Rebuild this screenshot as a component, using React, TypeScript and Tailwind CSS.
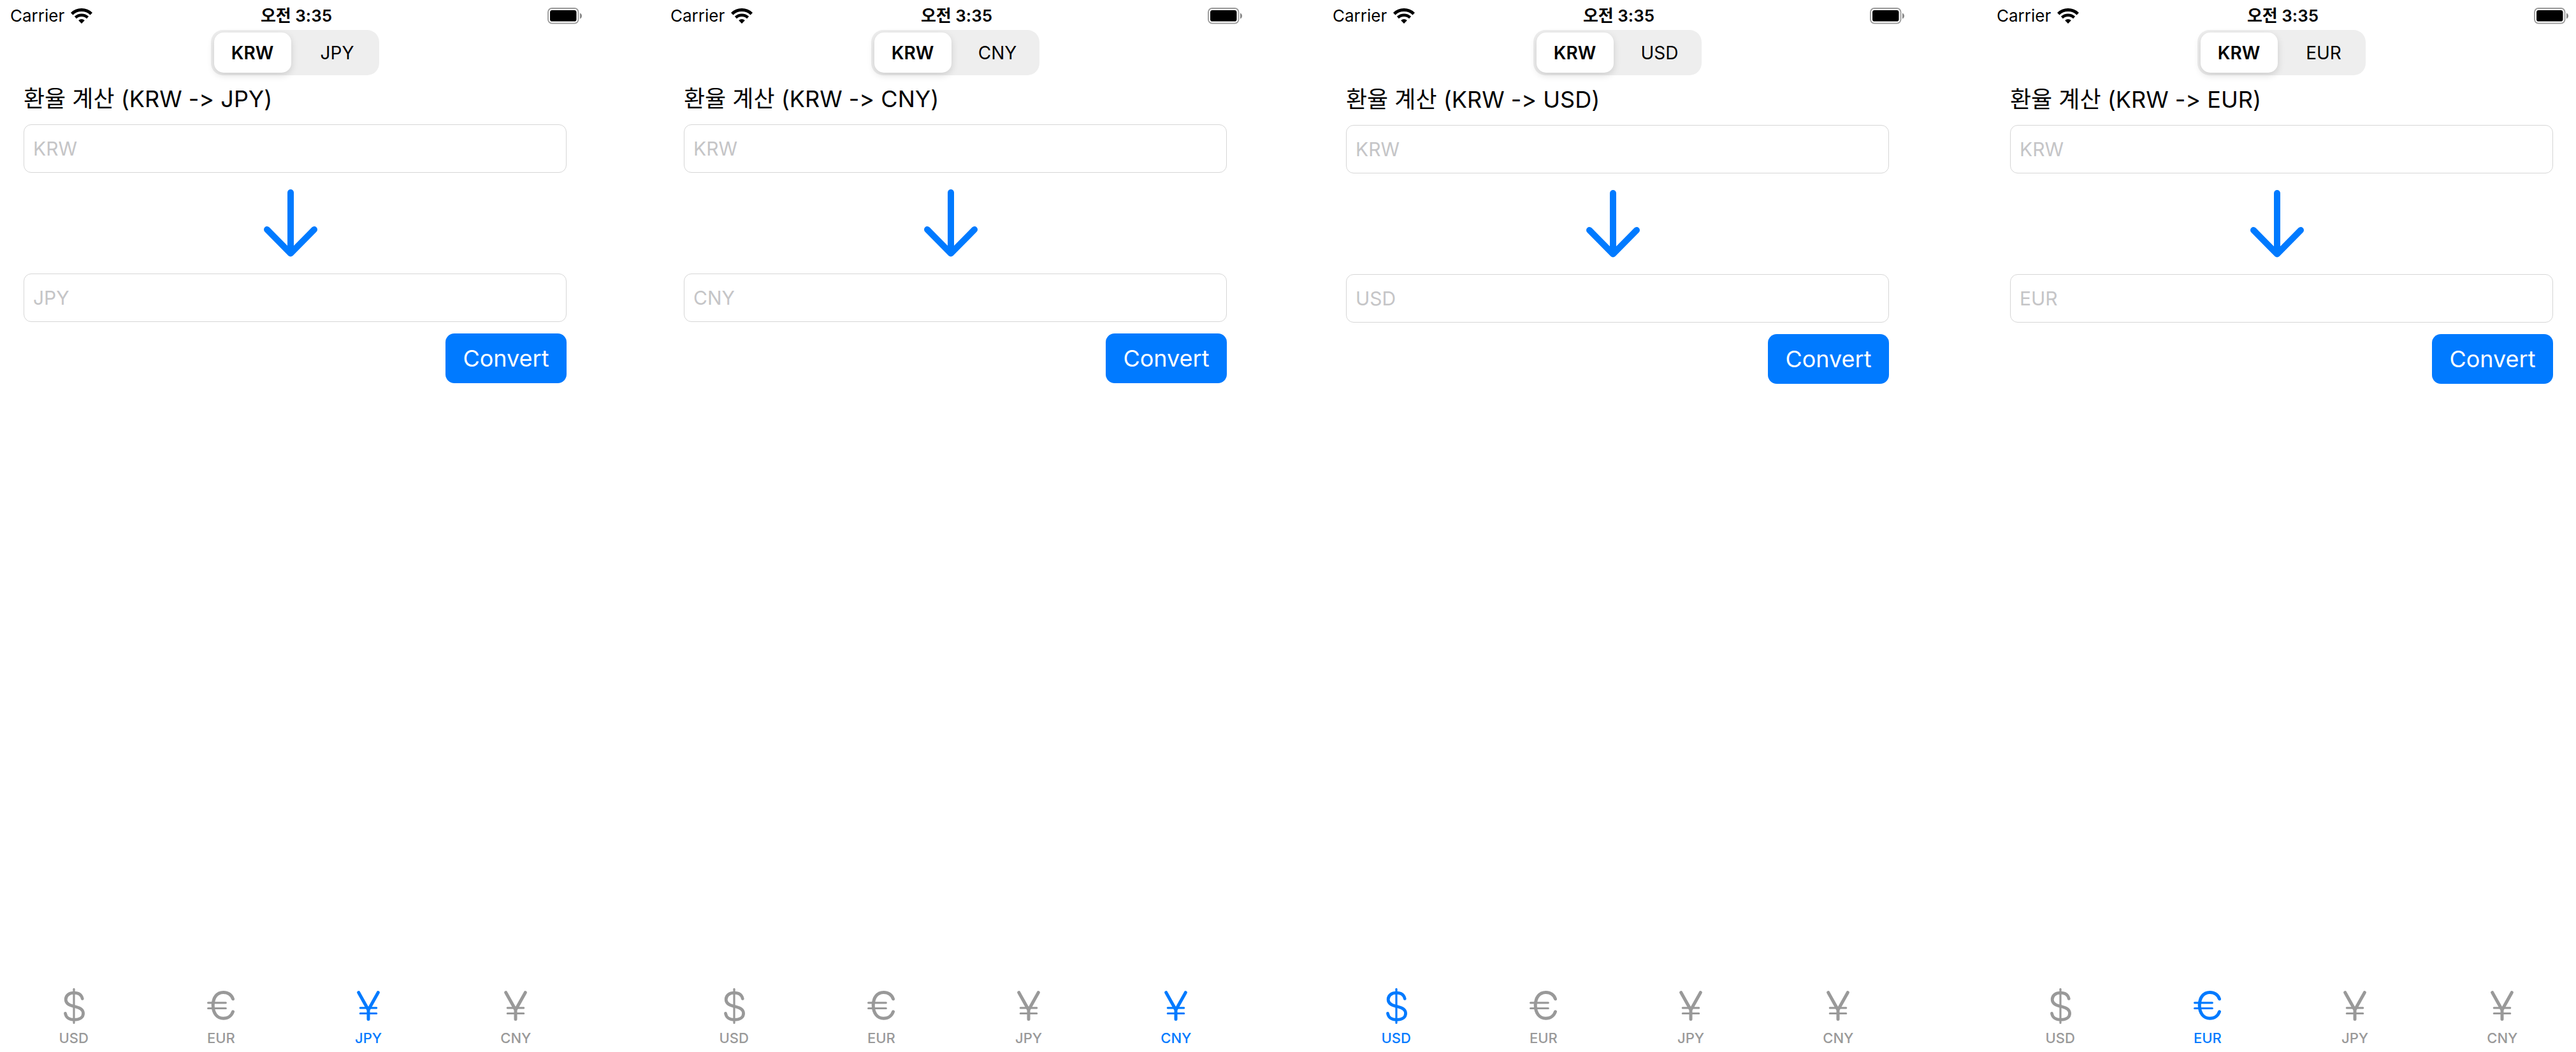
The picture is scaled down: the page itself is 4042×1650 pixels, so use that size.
import { useState } from "react";

type Code = "USD" | "EUR" | "JPY" | "CNY";

const TABS: Code[] = ["USD", "EUR", "JPY", "CNY"];

const SCREENS: { code: Code; gap: string; titleGap: string }[] = [
  { code: "JPY", gap: "", titleGap: "mt-[9px]" },
  { code: "CNY", gap: "ml-[111px]", titleGap: "mt-[9px]" },
  { code: "USD", gap: "ml-[114px]", titleGap: "mt-2.5" },
  { code: "EUR", gap: "ml-[117px]", titleGap: "mt-2.5" },
];

function WifiIcon() {
  return (
    <svg viewBox="0 0 34 24" className="h-6 w-[34px]" fill="none" stroke="currentColor" aria-hidden="true">
      <path d="M1.700 8.800a22 22 0 0 1 30.600 0" strokeWidth="5" />
      <path d="M7.400 14.500a14 14 0 0 1 19.200 0" strokeWidth="4.600" />
      <path d="M17 24l-4.900-4.900a7 7 0 0 1 9.800 0z" fill="currentColor" stroke="none" />
    </svg>
  );
}

function BatteryIcon() {
  return (
    <svg viewBox="0 0 55 26" className="h-[26px] w-[55px]" aria-hidden="true">
      <rect x="1" y="1" width="47.500" height="23.600" rx="6" fill="none" stroke="#999" strokeWidth="1.800" />
      <rect x="4" y="4" width="41.500" height="17.600" rx="3.400" fill="#000" />
      <path d="M51 8.400c4 1.400 4 7.600 0 9z" fill="#888" />
    </svg>
  );
}

function ArrowDownIcon() {
  return (
    <svg
      viewBox="0 0 84 106"
      className="h-[106px] w-[84px]"
      fill="none"
      stroke="currentColor"
      strokeWidth="10"
      strokeLinecap="round"
      strokeLinejoin="round"
      aria-hidden="true"
    >
      <path d="M42 5v94" />
      <path d="M5 63l37 37.500L79 63" />
    </svg>
  );
}

function CurrencyIcon({ code }: { code: Code }) {
  return (
    <svg
      viewBox="0 0 56 58"
      className="h-[58px] w-14"
      fill="none"
      stroke="currentColor"
      strokeLinecap="round"
      strokeLinejoin="round"
      aria-hidden="true"
    >
      {code === "USD" && (
        <>
          <path d="M28 3.300v53" strokeWidth="3.200" />
          <path
            d="M41.200 18.300C39.800 12.300 35 9.200 28.200 9.200c-7.600 0-13 4-13 10.400 0 5.600 3.800 8.600 11 10.300l4.500 1.100c8 1.900 11.900 4.800 11.900 10.500 0 6.300-5.700 9.900-14.200 9.900-7.600 0-13-3.600-13.900-9.900"
            strokeWidth="4.800"
          />
        </>
      )}
      {code === "EUR" && (
        <>
          <path
            d="M46.500 18.800C44.300 12.300 38.600 8.400 31.500 8.400 21.700 8.400 15.200 16.200 15.200 28.800s6.500 20.400 16.300 20.400c7.100 0 12.800-3.900 15-10.400"
            strokeWidth="5"
          />
          <path d="M7.600 24.800h27.700M7.600 33.500h27.700" strokeWidth="3.200" />
        </>
      )}
      {(code === "JPY" || code === "CNY") && (
        <>
          <path d="M12.700 8.700L28 36 43.300 8.700M28 36v14.500" strokeWidth="5" />
          <path d="M15.300 32.800h25.400M15.300 41.500h25.400" strokeWidth="3.200" />
        </>
      )}
    </svg>
  );
}

function StatusBar() {
  return (
    <header className="grid h-[47px] grid-cols-3 items-center pt-0.5 pr-[11px] pl-4 text-[26px] leading-8">
      <div className="flex items-center gap-2.5">
        <span>Carrier</span>
        <WifiIcon />
      </div>
      <span className="text-center font-semibold">오전 3:35</span>
      <div className="flex justify-end">
        <BatteryIcon />
      </div>
    </header>
  );
}

function SegmentedControl({ code }: { code: Code }) {
  const [source, setSource] = useState("KRW");
  return (
    <div className="mx-auto flex h-[71px] w-66 gap-3 rounded-[19px] bg-[#eeeeee] px-[5px] py-1">
      {["KRW", code].map((item) => (
        <button
          key={item}
          type="button"
          aria-pressed={item === source}
          onClick={() => setSource(item)}
          className={
            item === source
              ? "flex-1 rounded-[15px] bg-white text-[28px] leading-9 font-semibold shadow-[0_4px_12px_rgba(0,0,0,0.14)]"
              : "flex-1 rounded-[15px] text-[28px] leading-9"
          }
        >
          {item}
        </button>
      ))}
    </div>
  );
}

function AmountField({ code }: { code: string }) {
  return (
    <input
      type="text"
      inputMode="decimal"
      aria-label={code}
      placeholder={code}
      className="h-19 w-full rounded-xl border border-[#d6d6d6] bg-white px-3.5 text-[30px] leading-9 placeholder:text-[#c5c5c7]"
    />
  );
}

function TabBar({ active }: { active: Code }) {
  return (
    <nav className="mt-auto grid grid-cols-4 pb-2">
      {TABS.map((code) => (
        <button
          key={code}
          type="button"
          aria-current={code === active ? "page" : undefined}
          className={
            code === active
              ? "flex flex-col items-center gap-2 text-[#007aff]"
              : "flex flex-col items-center gap-2 text-[#999999]"
          }
        >
          <CurrencyIcon code={code} />
          <span className="text-[22px] leading-7 font-medium">{code}</span>
        </button>
      ))}
    </nav>
  );
}

function Screen({ code, gap, titleGap }: { code: Code; gap: string; titleGap: string }) {
  return (
    <section className={`flex min-w-0 flex-1 flex-col ${gap}`}>
      <StatusBar />
      <SegmentedControl code={code} />
      <main className="flex flex-col pr-9 pl-[37px]">
        <h1 className={`text-[36px] leading-14 whitespace-nowrap [font-variant-ligatures:none] ${titleGap}`}>
          환율 계산 (KRW -&gt; {code})
        </h1>
        <div className="mt-3 flex flex-col items-center gap-[26px]">
          <AmountField code="KRW" />
          <div className="pr-3.5 text-[#007aff]">
            <ArrowDownIcon />
          </div>
          <AmountField code={code} />
        </div>
        <button
          type="button"
          className="mt-[18px] h-[78px] w-[190px] self-end rounded-[14px] bg-[#007aff] text-[36px] leading-11 text-white"
        >
          Convert
        </button>
      </main>
      <TabBar active={code} />
    </section>
  );
}

export default function App() {
  return (
    <div className="flex min-h-screen bg-white font-['Inter','Noto_Sans_CJK_KR',sans-serif] text-black">
      {SCREENS.map((screen) => (
        <Screen key={screen.code} {...screen} />
      ))}
    </div>
  );
}
